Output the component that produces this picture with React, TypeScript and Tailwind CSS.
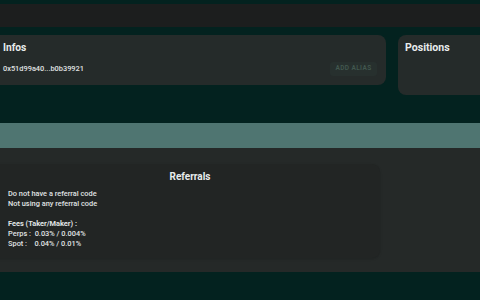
export default function App() {
  return (
    <div className="w-[480px] h-[300px] overflow-hidden bg-[#03221f] font-['Roboto',sans-serif] text-[#e8ecec]">
      {/* top bar */}
      <div className="mt-[4px] h-[23px] bg-[#1c1e1e]" />

      {/* cards row */}
      <div className="mt-[8px] flex items-start gap-[12px] -ml-[10px]">
        <div className="w-[396px] h-[50px] rounded-lg bg-[#252b2a] pl-[13px] pr-[9px] pt-[5px]">
          <div className="text-[10.2px] font-bold leading-[16px]">Infos</div>
          <div className="mt-[6px] flex items-center justify-between">
            <span className="text-[7.4px] font-medium leading-[10px] text-[#e0e4e4]">0x51d99a40...b0b39921</span>
            <button className="h-[14px] w-[47px] rounded-[3px] bg-[#27302e] text-[6.5px] font-semibold tracking-[0.06em] text-[#42584f]">
              ADD ALIAS
            </button>
          </div>
        </div>
        <div className="flex-1 h-[60px] rounded-l-lg bg-[#252b2a] pl-[7px] pt-[6px]">
          <div className="text-[10.6px] font-bold leading-[14px]">Positions</div>
        </div>
      </div>

      {/* teal band */}
      <div className="mt-[28px] h-[25px] bg-[#4f7571]" />

      {/* referrals section */}
      <div className="h-[124px] bg-[#252928] pt-[16px]">
        <div className="-ml-[10px] w-[390px] h-[94px] rounded-lg bg-[#222524] pl-[18px] pt-[6px] shadow-sm">
          <div className="text-center text-[10px] font-bold leading-[14px] pr-[8px]">Referrals</div>
          <div className="mt-[5px] text-[7.4px] font-medium leading-[10px] text-[#e0e4e4]">
            <div>Do not have a referral code</div>
            <div>Not using any referral code</div>
            <div className="mt-[10px] font-bold">Fees (Taker/Maker) :</div>
            <div>Perps :&nbsp;&nbsp;0.03% / 0.004%</div>
            <div>Spot :&nbsp;&nbsp;&nbsp;&nbsp;0.04% / 0.01%</div>
          </div>
        </div>
      </div>
    </div>
  );
}
